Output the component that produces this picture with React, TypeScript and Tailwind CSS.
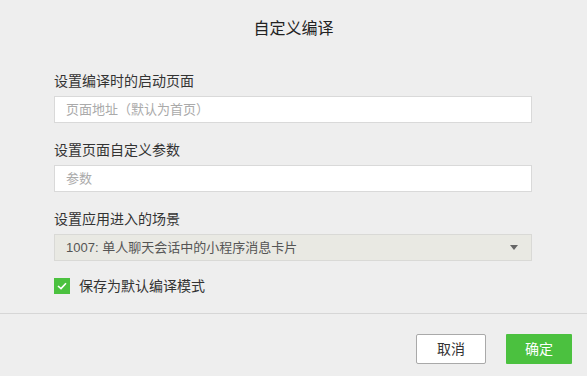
import React from "react";

export default function App() {
  return (
    <div
      className="w-[587px] h-[376px] bg-[#eeeeee] overflow-hidden flex flex-col text-[#333333]"
      style={{ fontFamily: '"Liberation Sans", "Noto Sans CJK SC", sans-serif' }}
    >
      <div className="mt-[17px] h-[24px] text-[16px] leading-[24px] text-center text-[#222222]">
        自定义编译
      </div>
      <div className="mt-[30px] pl-[54px] pr-[55px] flex flex-col">
        <div className="h-[20px] text-[14px] leading-[20px]">设置编译时的启动页面</div>
        <div className="mt-[5px] h-[27px] bg-white border border-[#d9d9d9] flex items-center px-[11px] text-[13px] text-[#aaaaaa]">
          页面地址（默认为首页）
        </div>
        <div className="mt-[17px] h-[20px] text-[14px] leading-[20px]">设置页面自定义参数</div>
        <div className="mt-[5px] h-[27px] bg-white border border-[#d9d9d9] flex items-center px-[11px] text-[13px] text-[#aaaaaa]">
          参数
        </div>
        <div className="mt-[17px] h-[20px] text-[14px] leading-[20px]">设置应用进入的场景</div>
        <div className="mt-[5px] h-[27px] bg-[#e9e9e3] border border-[#d9d9d6] flex items-center justify-between pl-[11px] pr-[13px] text-[13px] text-[#555555]">
          <span>1007: 单人聊天会话中的小程序消息卡片</span>
          <svg width="8" height="5" viewBox="0 0 8 5">
            <path d="M0 0 H8 L4 5 Z" fill="#666666" />
          </svg>
        </div>
        <div className="mt-[17px] h-[16px] flex items-center gap-[9px]">
          <div className="w-[16px] h-[16px] bg-[#4bc13f] flex items-center justify-center">
            <svg width="10" height="8" viewBox="0 0 10 8">
              <path d="M1 4 L4 6.6 L9 1.2" stroke="white" strokeWidth="1.6" fill="none" />
            </svg>
          </div>
          <span className="text-[14px] leading-[20px] text-[#333333]">保存为默认编译模式</span>
        </div>
      </div>
      <div className="mt-[19px] border-t border-[#d6d6d6]" />
      <div className="mt-[20px] flex justify-end gap-[20px] pr-[15px]">
        <div className="w-[70px] h-[30px] bg-white border border-[#a9a9a9] rounded-[2px] flex items-center justify-center text-[14px] text-[#333333]">
          取消
        </div>
        <div className="w-[66px] h-[30px] bg-[#4bc13f] rounded-[1px] flex items-center justify-center text-[14px] text-white">
          确定
        </div>
      </div>
    </div>
  );
}
